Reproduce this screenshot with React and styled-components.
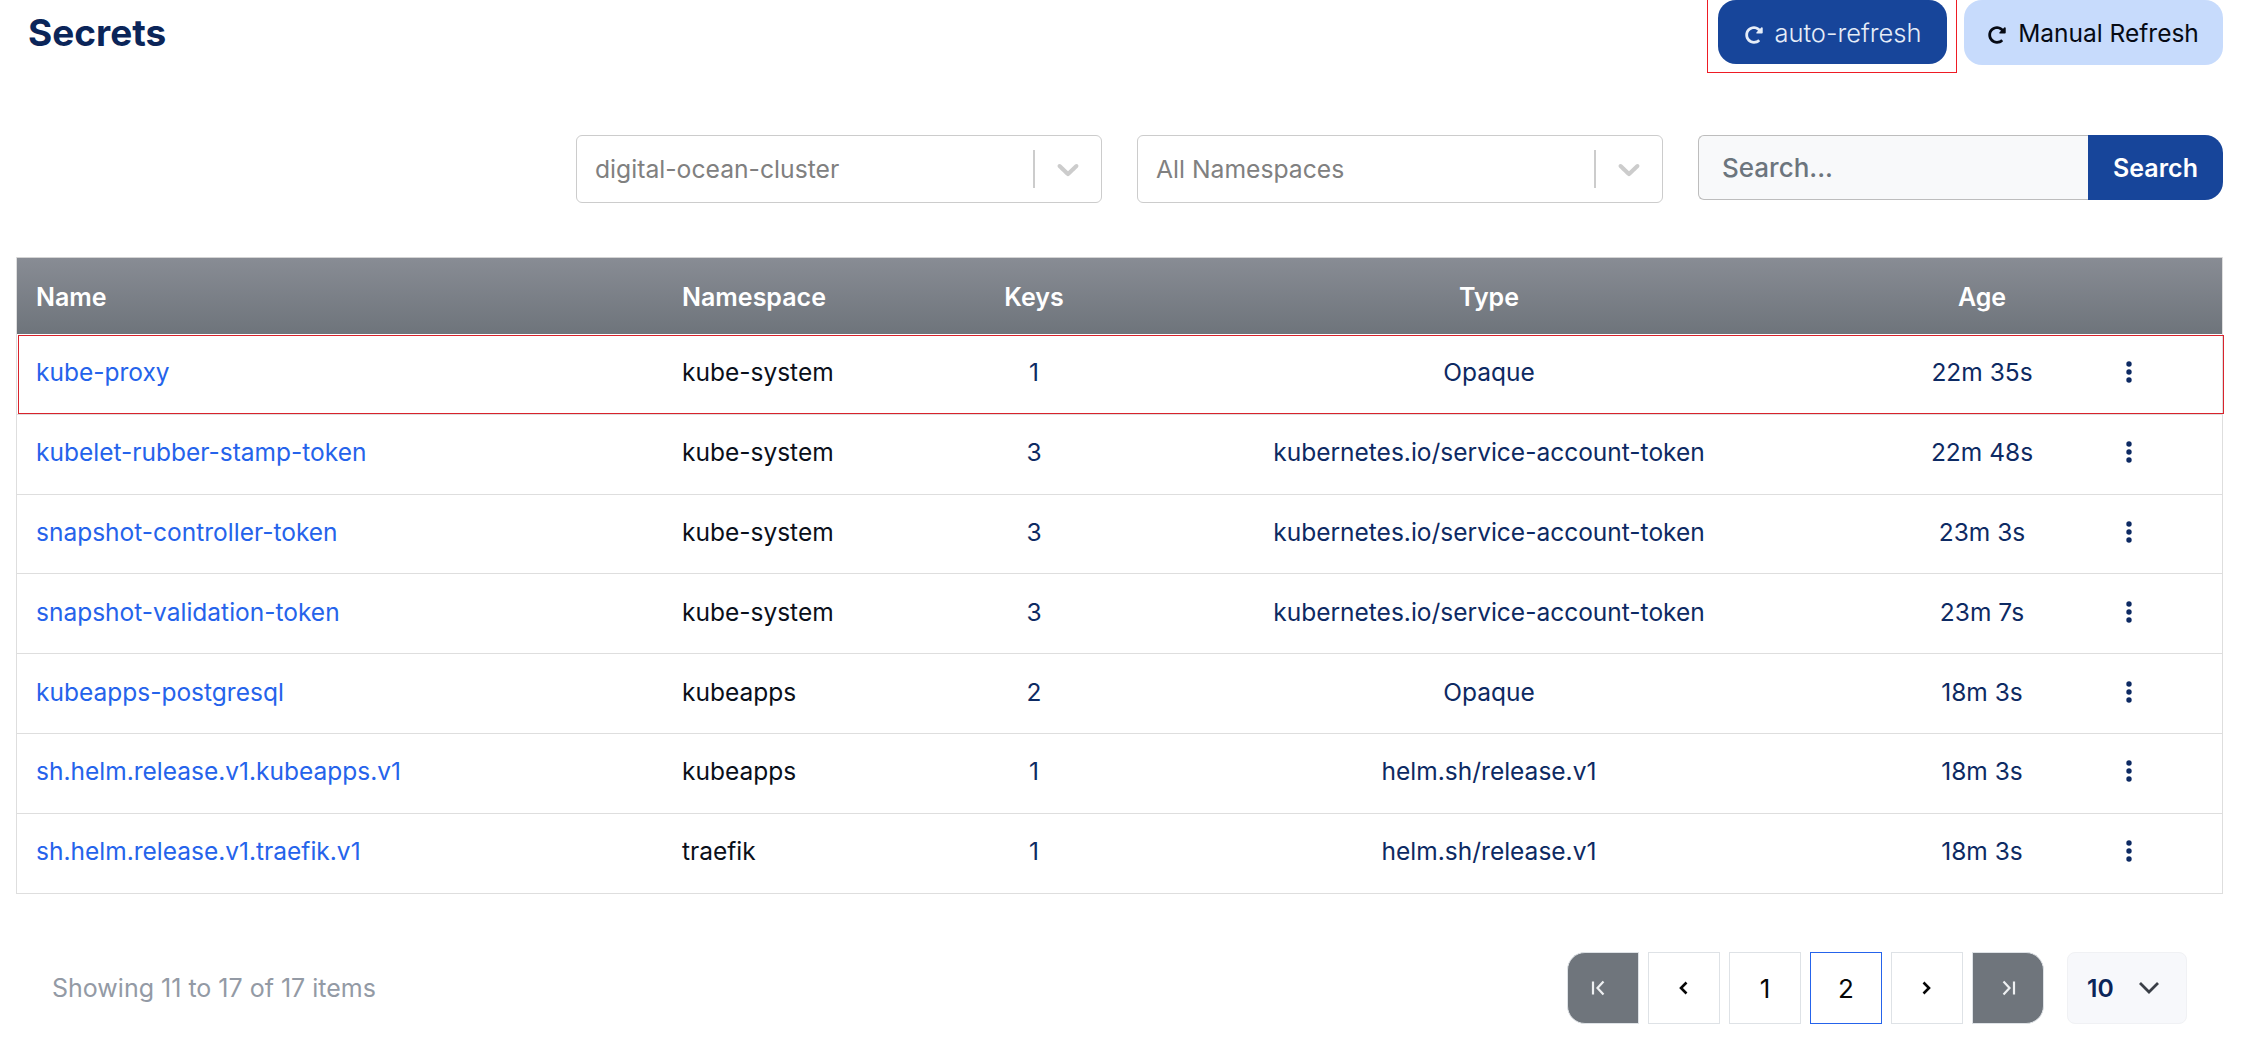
import React from "react";
import styled, { createGlobalStyle } from "styled-components";
import { FaRedoAlt } from "react-icons/fa";

const Global = createGlobalStyle`
  html, body { margin: 0; padding: 0; background: #fff; }
  body { font-family: Inter, "Liberation Sans", sans-serif; overflow: hidden; }
  * { box-sizing: border-box; }
`;

const Page = styled.div`
  width: 2248px;
  height: 1056px;
  padding: 0 25px 0 16px;
  display: flex;
  flex-direction: column;
`;

const TopBar = styled.div`
  display: flex;
  justify-content: space-between;
  align-items: flex-start;
  padding-left: 12px;
  height: 135px;
`;

const Title = styled.h1`
  margin: 12px 0 0;
  font-size: 37px;
  line-height: 42px;
  font-weight: 700;
  color: #0b2559;
`;

const TopActions = styled.div`
  display: flex;
  align-items: flex-start;
  gap: 7px;
`;

const Highlight = styled.div`
  border: 1px solid #ee1c25;
  border-top: none;
  padding: 0 9px 8px 10px;
`;

const RefreshButton = styled.button`
  display: flex;
  align-items: center;
  justify-content: center;
  gap: ${(p) => (p.$solid ? "11px" : "12px")};
  height: ${(p) => (p.$solid ? "64px" : "65px")};
  width: ${(p) => (p.$solid ? "229px" : "259px")};
  padding: 0 0 0 ${(p) => (p.$solid ? "2px" : "0")};
  border: none;
  border-radius: 18px;
  background: ${(p) => (p.$solid ? "#17459a" : "#c7dbfc")};
  color: ${(p) => (p.$solid ? "#e6edf8" : "#060a14")};
  font: ${(p) => (p.$solid ? "300 25.5px" : "400 24.5px")} Inter, sans-serif;
  svg { margin-top: 5px; }
`;

const Filters = styled.div`
  display: flex;
  justify-content: flex-end;
  align-items: flex-start;
  gap: 35px;
  height: 122px;
`;

const SelectBox = styled.div`
  width: 526px;
  height: 68px;
  display: flex;
  align-items: center;
  padding-left: 18px;
  border: 1px solid #cccccc;
  border-radius: 6px;
  background: #fff;
  color: #808080;
  font-size: 24.7px;
`;

const SelectValue = styled.span`
  flex: 1;
`;

const SelectDivider = styled.span`
  width: 2px;
  height: 38px;
  background: #cccccc;
`;

const SelectArrow = styled.span`
  width: 66px;
  display: flex;
  justify-content: center;
  color: #cccccc;
`;

const SearchGroup = styled.div`
  display: flex;
  height: 65px;
`;

const SearchInput = styled.div`
  width: 390px;
  display: flex;
  align-items: center;
  padding-left: 23px;
  background: #f8f9fa;
  border: 1px solid #bdbdbd;
  border-right: none;
  border-radius: 6px 0 0 6px;
  color: #6c757d;
  font-size: 26px;
  font-weight: 500;
`;

const SearchButton = styled.button`
  width: 135px;
  border: none;
  border-radius: 0 18px 18px 0;
  background: #17459a;
  color: #fff;
  font: 600 25px Inter, sans-serif;
`;

const Table = styled.div`
  border: 1px solid #dedede;
  border-top: none;
  width: 2207px;
`;

const columns = "646px 287px 168px 742px 244px 119px";

const HeadRow = styled.div`
  display: grid;
  grid-template-columns: ${columns};
  align-items: center;
  height: 77px;
  padding-top: 2px;
  border-top: 1px solid #d4d4d4;
  background: linear-gradient(#888c94, #6e747b);
  color: #fff;
  font-size: 25px;
  font-weight: 600;
`;

const Row = styled.div`
  position: relative;
  display: grid;
  grid-template-columns: ${columns};
  align-items: center;
  height: 79.8px;
  padding-bottom: 4px;
  border-top: ${(p) => (p.$first ? "none" : "1px solid #dedede")};
  font-size: 24.5px;
  color: #0d2a63;
  ${(p) =>
    p.$flagged &&
    `&::after {
      content: "";
      position: absolute;
      left: 1px;
      right: -2px;
      top: 1px;
      bottom: 0;
      border: 1px solid #d8232c;
      pointer-events: none;
    }`}
`;

const Cell = styled.div`
  padding-left: ${(p) => (p.$center ? 0 : "19px")};
  text-align: ${(p) => (p.$center ? "center" : "left")};
  white-space: nowrap;
`;

const NsCell = styled(Cell)`
  color: #0a0f1a;
`;

const NameLink = styled.a`
  color: #2563eb;
  text-decoration: none;
`;

const KebabCell = styled.div`
  padding-left: 20px;
  display: flex;
  color: #0d2a63;
`;

const Footer = styled.div`
  display: flex;
  align-items: flex-start;
  justify-content: space-between;
  padding: 58.6px 36px 0 36px;
`;

const Info = styled.span`
  margin-top: 21px;
  color: #939aa5;
  font-size: 25px;
`;

const Pagination = styled.div`
  display: flex;
  align-items: flex-start;
  gap: 23px;
`;

const PageList = styled.div`
  display: flex;
  gap: 9px;
`;

const PageButton = styled.button`
  width: 72px;
  height: 72px;
  padding: 0 ${(p) => (p.$edge === "first" ? "8px" : p.$nudge ? "2px" : "0")} 0 0;
  display: flex;
  align-items: center;
  justify-content: center;
  background: ${(p) => (p.$edge ? "#6f757c" : "#fff")};
  border: 1px solid ${(p) => (p.$active ? "#2563eb" : "#dee2e6")};
  border-radius: ${(p) =>
    p.$edge === "first" ? "18px 0 0 18px" : p.$edge === "last" ? "0 18px 18px 0" : "0"};
  color: ${(p) => (p.$edge ? "#eef0f2" : "#060606")};
  font: 400 26px Inter, sans-serif;
`;

const SizeSelect = styled.div`
  width: 120px;
  height: 72px;
  display: flex;
  align-items: center;
  justify-content: space-between;
  padding: 0 26px 0 19px;
  background: #f7f8fb;
  border: 1px solid #f0f1f4;
  border-radius: 8px;
  color: #0b2559;
  font-size: 24.7px;
  font-weight: 600;
`;

const SelectChevron = () => (
  <svg width="36" height="36" viewBox="0 0 20 20" fill="currentColor" aria-hidden="true">
    <path d="M4.516 7.548c0.436-0.446 1.043-0.481 1.576 0l3.908 3.747 3.908-3.747c0.533-0.481 1.141-0.446 1.574 0 0.436 0.445 0.408 1.197 0 1.615-0.406 0.418-4.695 4.502-4.695 4.502-0.217 0.223-0.502 0.335-0.787 0.335s-0.57-0.112-0.789-0.335c0 0-4.287-4.084-4.695-4.502s-0.436-1.17 0-1.615z" />
  </svg>
);

const Kebab = () => (
  <svg width="10" height="24" viewBox="0 0 10 24" fill="currentColor" aria-hidden="true">
    <circle cx="5" cy="4" r="2.7" />
    <circle cx="5" cy="12" r="2.7" />
    <circle cx="5" cy="20" r="2.7" />
  </svg>
);

const Glyph = ({ d, w = 2.2 }) => (
  <svg width="20" height="20" viewBox="0 0 20 20" fill="none" stroke="currentColor" strokeWidth={w} aria-hidden="true">
    <path d={d} />
  </svg>
);

const rows = [
  ["kube-proxy", "kube-system", "1", "Opaque", "22m 35s"],
  ["kubelet-rubber-stamp-token", "kube-system", "3", "kubernetes.io/service-account-token", "22m 48s"],
  ["snapshot-controller-token", "kube-system", "3", "kubernetes.io/service-account-token", "23m 3s"],
  ["snapshot-validation-token", "kube-system", "3", "kubernetes.io/service-account-token", "23m 7s"],
  ["kubeapps-postgresql", "kubeapps", "2", "Opaque", "18m 3s"],
  ["sh.helm.release.v1.kubeapps.v1", "kubeapps", "1", "helm.sh/release.v1", "18m 3s"],
  ["sh.helm.release.v1.traefik.v1", "traefik", "1", "helm.sh/release.v1", "18m 3s"],
];

export default function App() {
  return (
    <Page>
      <Global />
      <TopBar>
        <Title>Secrets</Title>
        <TopActions>
          <Highlight>
            <RefreshButton $solid>
              <FaRedoAlt size={18} />
              auto-refresh
            </RefreshButton>
          </Highlight>
          <RefreshButton>
            <FaRedoAlt size={18} />
            Manual Refresh
          </RefreshButton>
        </TopActions>
      </TopBar>

      <Filters>
        <SelectBox>
          <SelectValue>digital-ocean-cluster</SelectValue>
          <SelectDivider />
          <SelectArrow><SelectChevron /></SelectArrow>
        </SelectBox>
        <SelectBox>
          <SelectValue>All Namespaces</SelectValue>
          <SelectDivider />
          <SelectArrow><SelectChevron /></SelectArrow>
        </SelectBox>
        <SearchGroup>
          <SearchInput>Search...</SearchInput>
          <SearchButton>Search</SearchButton>
        </SearchGroup>
      </Filters>

      <Table>
        <HeadRow>
          <Cell>Name</Cell>
          <Cell>Namespace</Cell>
          <Cell $center>Keys</Cell>
          <Cell $center>Type</Cell>
          <Cell $center>Age</Cell>
          <Cell />
        </HeadRow>
        {rows.map((r, i) => (
          <Row key={r[0]} $first={i === 0} $flagged={i === 0}>
            <Cell><NameLink href="#">{r[0]}</NameLink></Cell>
            <NsCell>{r[1]}</NsCell>
            <Cell $center>{r[2]}</Cell>
            <Cell $center>{r[3]}</Cell>
            <Cell $center>{r[4]}</Cell>
            <KebabCell><Kebab /></KebabCell>
          </Row>
        ))}
      </Table>

      <Footer>
        <Info>Showing 11 to 17 of 17 items</Info>
        <Pagination>
          <PageList>
            <PageButton $edge="first"><Glyph d="M4 3.5v13M14.5 3.5L8.5 10l6 6.5" /></PageButton>
            <PageButton $nudge><Glyph d="M13.5 4.5L8 10l5.5 5.5" w={2.6} /></PageButton>
            <PageButton>1</PageButton>
            <PageButton $active>2</PageButton>
            <PageButton><Glyph d="M6.5 4.5L12 10l-5.5 5.5" w={2.6} /></PageButton>
            <PageButton $edge="last"><Glyph d="M16 3.5v13M5.5 3.5l6 6.5-6 6.5" /></PageButton>
          </PageList>
          <SizeSelect>
            10
            <svg width="22" height="14" viewBox="0 0 22 14" fill="none" stroke="#3a3f47" strokeWidth="2.8" aria-hidden="true">
              <path d="M2 2l9 9 9-9" />
            </svg>
          </SizeSelect>
        </Pagination>
      </Footer>
    </Page>
  );
}
